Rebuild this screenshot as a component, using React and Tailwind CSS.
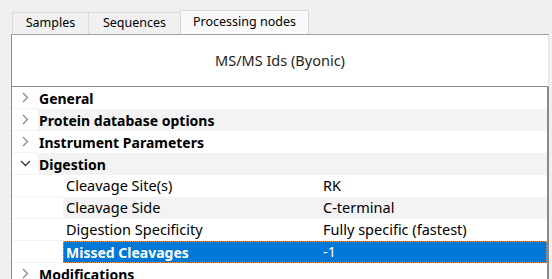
import React from "react";

const Chevron = ({ open }) =>
  open ? (
    <svg width="11" height="7" viewBox="0 0 11 7" className="block">
      <path d="M1 1 L5.5 5.5 L10 1" fill="none" stroke="#333" strokeWidth="1.3" />
    </svg>
  ) : (
    <svg width="7" height="11" viewBox="0 0 7 11" className="block">
      <path d="M1 1 L5.5 5.5 L1 10" fill="none" stroke="#8a8a8a" strokeWidth="1.3" />
    </svg>
  );

const TopRow = ({ label, gray, open }) => (
  <div className="flex h-[22px] shrink-0">
    <div className="w-[26px] flex items-center justify-center border-b border-[#f3f3f3] bg-white">
      <Chevron open={open} />
    </div>
    <div
      className={`flex-1 flex items-center pl-[1px] font-bold text-[14px] text-black ${
        gray ? "bg-[#f3f3f3]" : "bg-white"
      }`}
    >
      {label}
    </div>
  </div>
);

const ChildRow = ({ label, value, gray, selected }) => (
  <div className="flex h-[22px] shrink-0">
    <div className="w-[51px] border-b border-[#f3f3f3] bg-white" />
    {selected ? (
      <div className="flex-1 flex items-center bg-[#0078d7] text-white border border-dotted border-[#f0a050]">
        <div className="w-[259px] pl-[2px] font-bold text-[14px]">{label}</div>
        <div className="text-[14.5px]">{value}</div>
      </div>
    ) : (
      <div
        className={`flex-1 flex items-center text-[14.5px] text-black ${
          gray ? "bg-[#f3f3f3]" : "bg-white"
        }`}
      >
        <div className="w-[260px] pl-[3px]">{label}</div>
        <div>{value}</div>
      </div>
    )}
  </div>
);

export default function App() {
  return (
    <div
      className="w-[552px] h-[279px] bg-[#f0f0f0] overflow-hidden flex flex-col"
      style={{ fontFamily: '"Noto Sans", "Open Sans", sans-serif' }}
    >
      {/* Tabs */}
      <div className="flex items-end h-[34px] shrink-0 pl-[12px]">
        <div className="w-[76px] h-[22px] border-l border-t border-[#d9d9d9] bg-[#f0f0f0] flex items-center justify-center text-[12.5px] text-black">
          Samples
        </div>
        <div className="w-[92px] h-[22px] border-l border-t border-[#d9d9d9] bg-[#f0f0f0] flex items-center justify-center text-[12.5px] text-black">
          Sequences
        </div>
        <div className="w-[129px] h-[24px] border-l border-t border-r border-[#d9d9d9] bg-[#f9f9f9] flex items-center justify-center text-[12.5px] text-black">
          Processing nodes
        </div>
      </div>

      {/* Frame */}
      <div className="flex-1 min-h-0 ml-[11px] mr-[3px] border-t border-[#a0a0a0] flex flex-col">
        <div className="h-[52px] shrink-0 bg-white border-l border-[#8c8c8c] border-r border-r-[#e3e3e3] border-b border-b-[#8c8c8c] flex items-center justify-center text-[14.5px] text-[#1e1e1e]">
          MS/MS Ids (Byonic)
        </div>
        <div className="flex-1 min-h-0 overflow-hidden flex flex-col bg-white border-l border-[#8c8c8c] border-r-2 border-r-[#8a8a8a]">
          <TopRow label="General" />
          <TopRow label="Protein database options" gray />
          <TopRow label="Instrument Parameters" />
          <TopRow label="Digestion" gray open />
          <ChildRow label="Cleavage Site(s)" value="RK" />
          <ChildRow label="Cleavage Side" value="C-terminal" gray />
          <ChildRow label="Digestion Specificity" value="Fully specific (fastest)" />
          <ChildRow label="Missed Cleavages" value="-1" selected />
          <TopRow label="Modifications" />
        </div>
      </div>
    </div>
  );
}
